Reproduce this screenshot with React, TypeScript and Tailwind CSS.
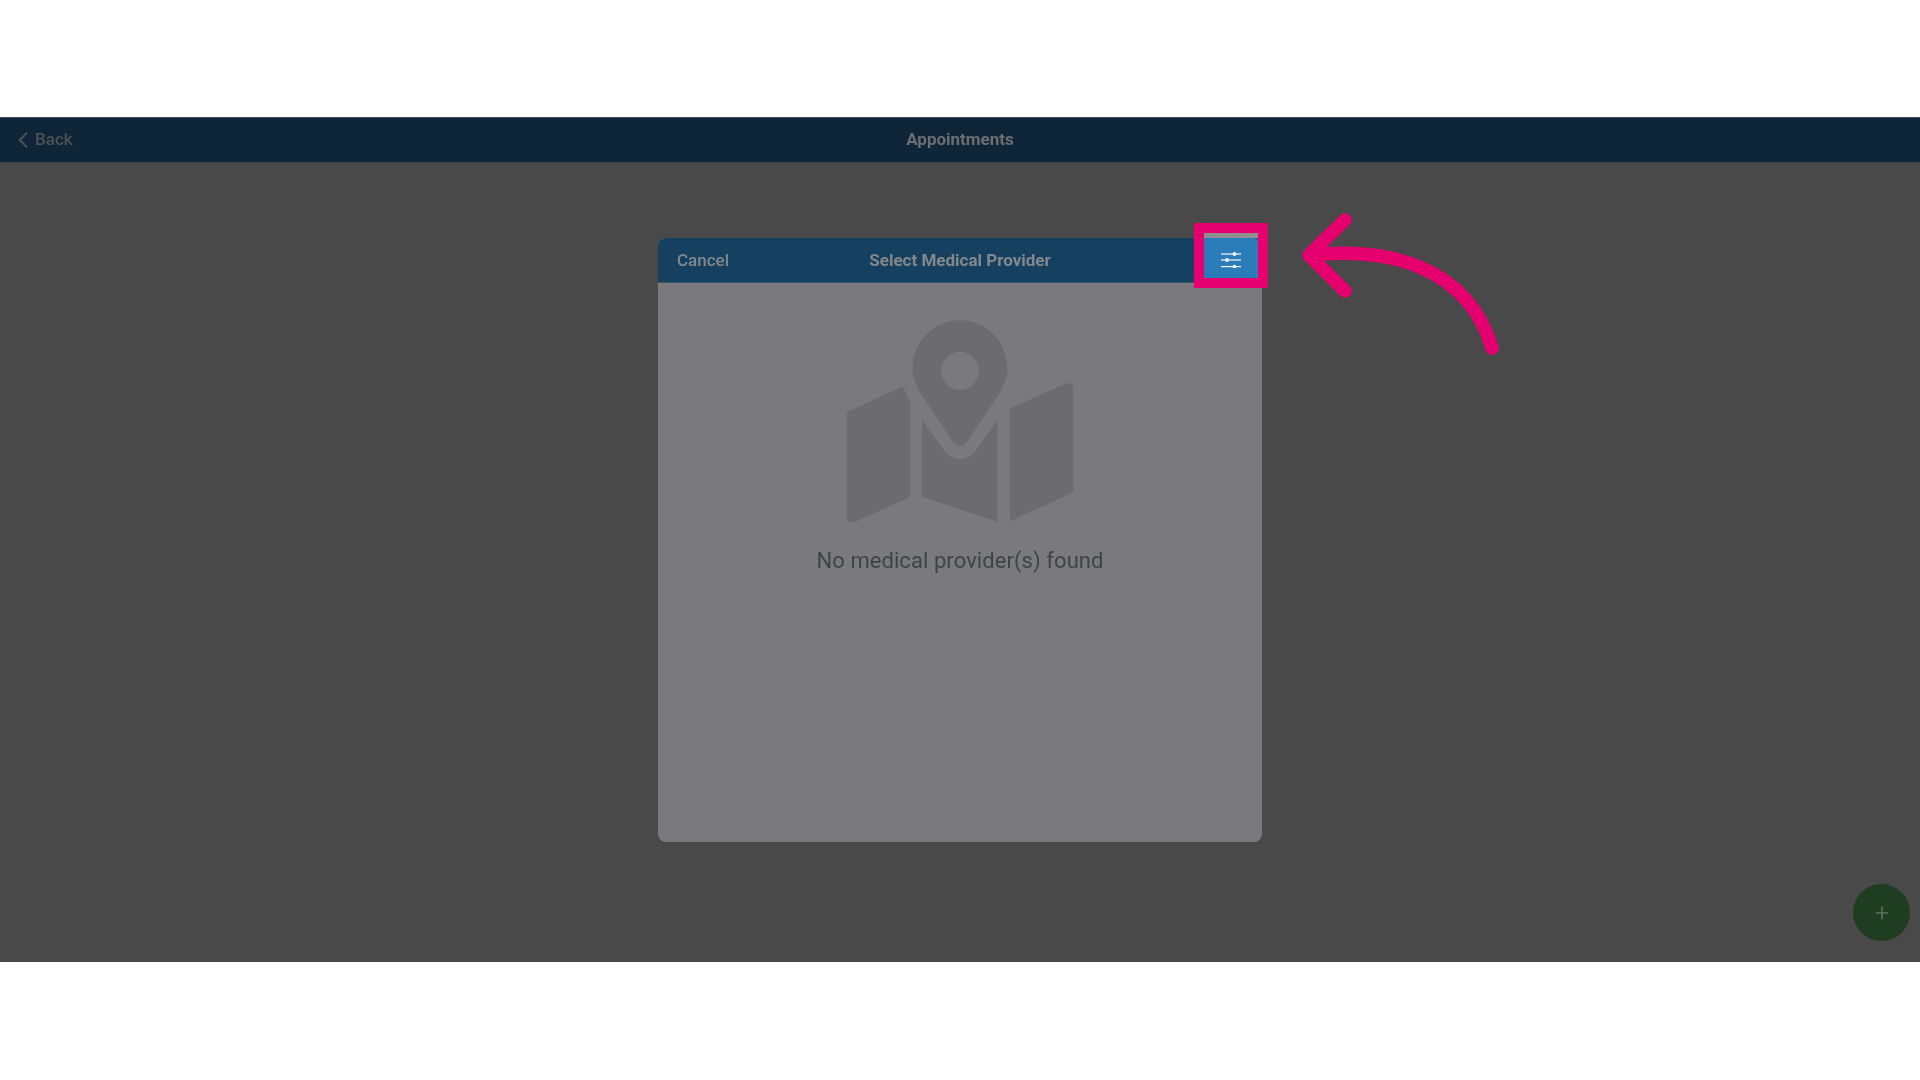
import React from "react";
import { ChevronLeft, Plus } from "lucide-react";

function MapIcon() {
  return (
    <svg viewBox="0 60 840 620" className="w-[280px] h-[207px] block blur-[0.5px]" fill="#6c6c6e">
      <path
        fillRule="evenodd"
        d="M420 60C342 60 278 124 278 205C278 235 288 258 303 281L400 427Q420 447 440 427L537 281C552 258 562 235 562 205C562 124 498 60 420 60ZM420 155A57 57 0 1 1 420 269A57 57 0 1 1 420 155Z"
      />
      <path d="M92 331L240 262Q248 258 252 266L270 305V582Q270 590 262 594L108 664Q82 672 80 648V345Q80 336 92 331Z" />
      <path d="M306 360L375 455Q420 500 465 455L532 360V665L306 590Z" />
      <path d="M570 325L736 251Q760 243 760 266V568Q760 576 750 581L570 663Z" />
    </svg>
  );
}

function SlidersIcon() {
  return (
    <svg viewBox="0 0 22 16" className="w-[22px] h-[16px] mt-[3px] blur-[0.3px]" fill="#f2f6fa">
      <rect x="1" y="1.4" width="20" height="1.2" />
      <rect x="1" y="7.4" width="20" height="1.2" />
      <rect x="1" y="14" width="20" height="1.2" />
      <circle cx="14.5" cy="2" r="1.9" />
      <circle cx="7" cy="8" r="1.9" />
      <circle cx="14.5" cy="14.6" r="1.9" />
    </svg>
  );
}

function Arrow() {
  return (
    <svg
      viewBox="0 0 210 150"
      className="absolute left-[1290px] top-[90px] w-[210px] h-[150px]"
      fill="none"
      stroke="#e6006f"
      strokeWidth="13.5"
      strokeLinecap="round"
      strokeLinejoin="round"
    >
      <path d="M55 13L19 48L55 84" />
      <path d="M21 48C100 40 178 60 202 141" />
    </svg>
  );
}

export default function App() {
  return (
    <div className="w-[1920px] h-[1080px] bg-white pt-[117px] overflow-hidden font-['Roboto',sans-serif]">
      <div className="relative w-full h-[845px] flex flex-col bg-[#494949]">
        {/* Top bar */}
        <div className="relative h-[45px] shrink-0 flex items-center justify-center bg-[#0f2639] border-t border-[#3d4c59]">
          <div className="absolute left-[10px] top-0 h-full flex items-center gap-[1px] text-[#4e5154] text-[17px] font-medium">
            <ChevronLeft size={26} strokeWidth={2} className="-mr-[2px] -mt-px" />
            <span className="blur-[0.4px]">Back</span>
          </div>
          <span className="text-[17px] font-bold text-[#6b6e71] blur-[0.4px]">Appointments</span>
        </div>
        <div className="h-px shrink-0 bg-[#3f3f40]" />

        {/* Modal */}
        <div className="flex-1 flex items-start justify-center pt-[75px]">
          <div className="w-[604px] h-[604px] rounded-lg overflow-hidden flex flex-col bg-[#7a7a7c]">
            <div className="relative h-[45px] shrink-0 flex items-center justify-center bg-[#15405f] border-b border-[#3a566c]">
              <span className="absolute left-[19px] pt-px text-[17px] font-medium text-[#83888c] blur-[0.4px]">Cancel</span>
              <span className="pt-px text-[17px] font-bold text-[#83888c] blur-[0.4px]">Select Medical Provider</span>
              <div className="absolute right-[4px] top-0 w-[54px] h-[40px] flex items-center justify-center bg-[#2a7db8] rounded-tr-sm">
                <SlidersIcon />
              </div>
            </div>
            <div className="flex-1 flex flex-col items-center pt-[37px]">
              <MapIcon />
              <p className="mt-[20px] text-[22px] leading-[28px] tracking-[0.07px] text-[#404346] blur-[0.4px]">No medical provider(s) found</p>
            </div>
          </div>
        </div>

        {/* Add button */}
        <div className="absolute left-[1853px] top-[767px] w-[57px] h-[57px] rounded-full flex items-center justify-center bg-[#1f3d20] text-[#5d6d5e]">
          <Plus size={20} strokeWidth={2} />
        </div>

        {/* Annotation */}
        <div className="absolute left-[1194px] top-[106px] w-[74px] h-[65px] border-[10px] border-[#e6006f]">
          <div className="h-[5px] bg-[#8f8f8f]" />
        </div>
        <Arrow />
      </div>
    </div>
  );
}
